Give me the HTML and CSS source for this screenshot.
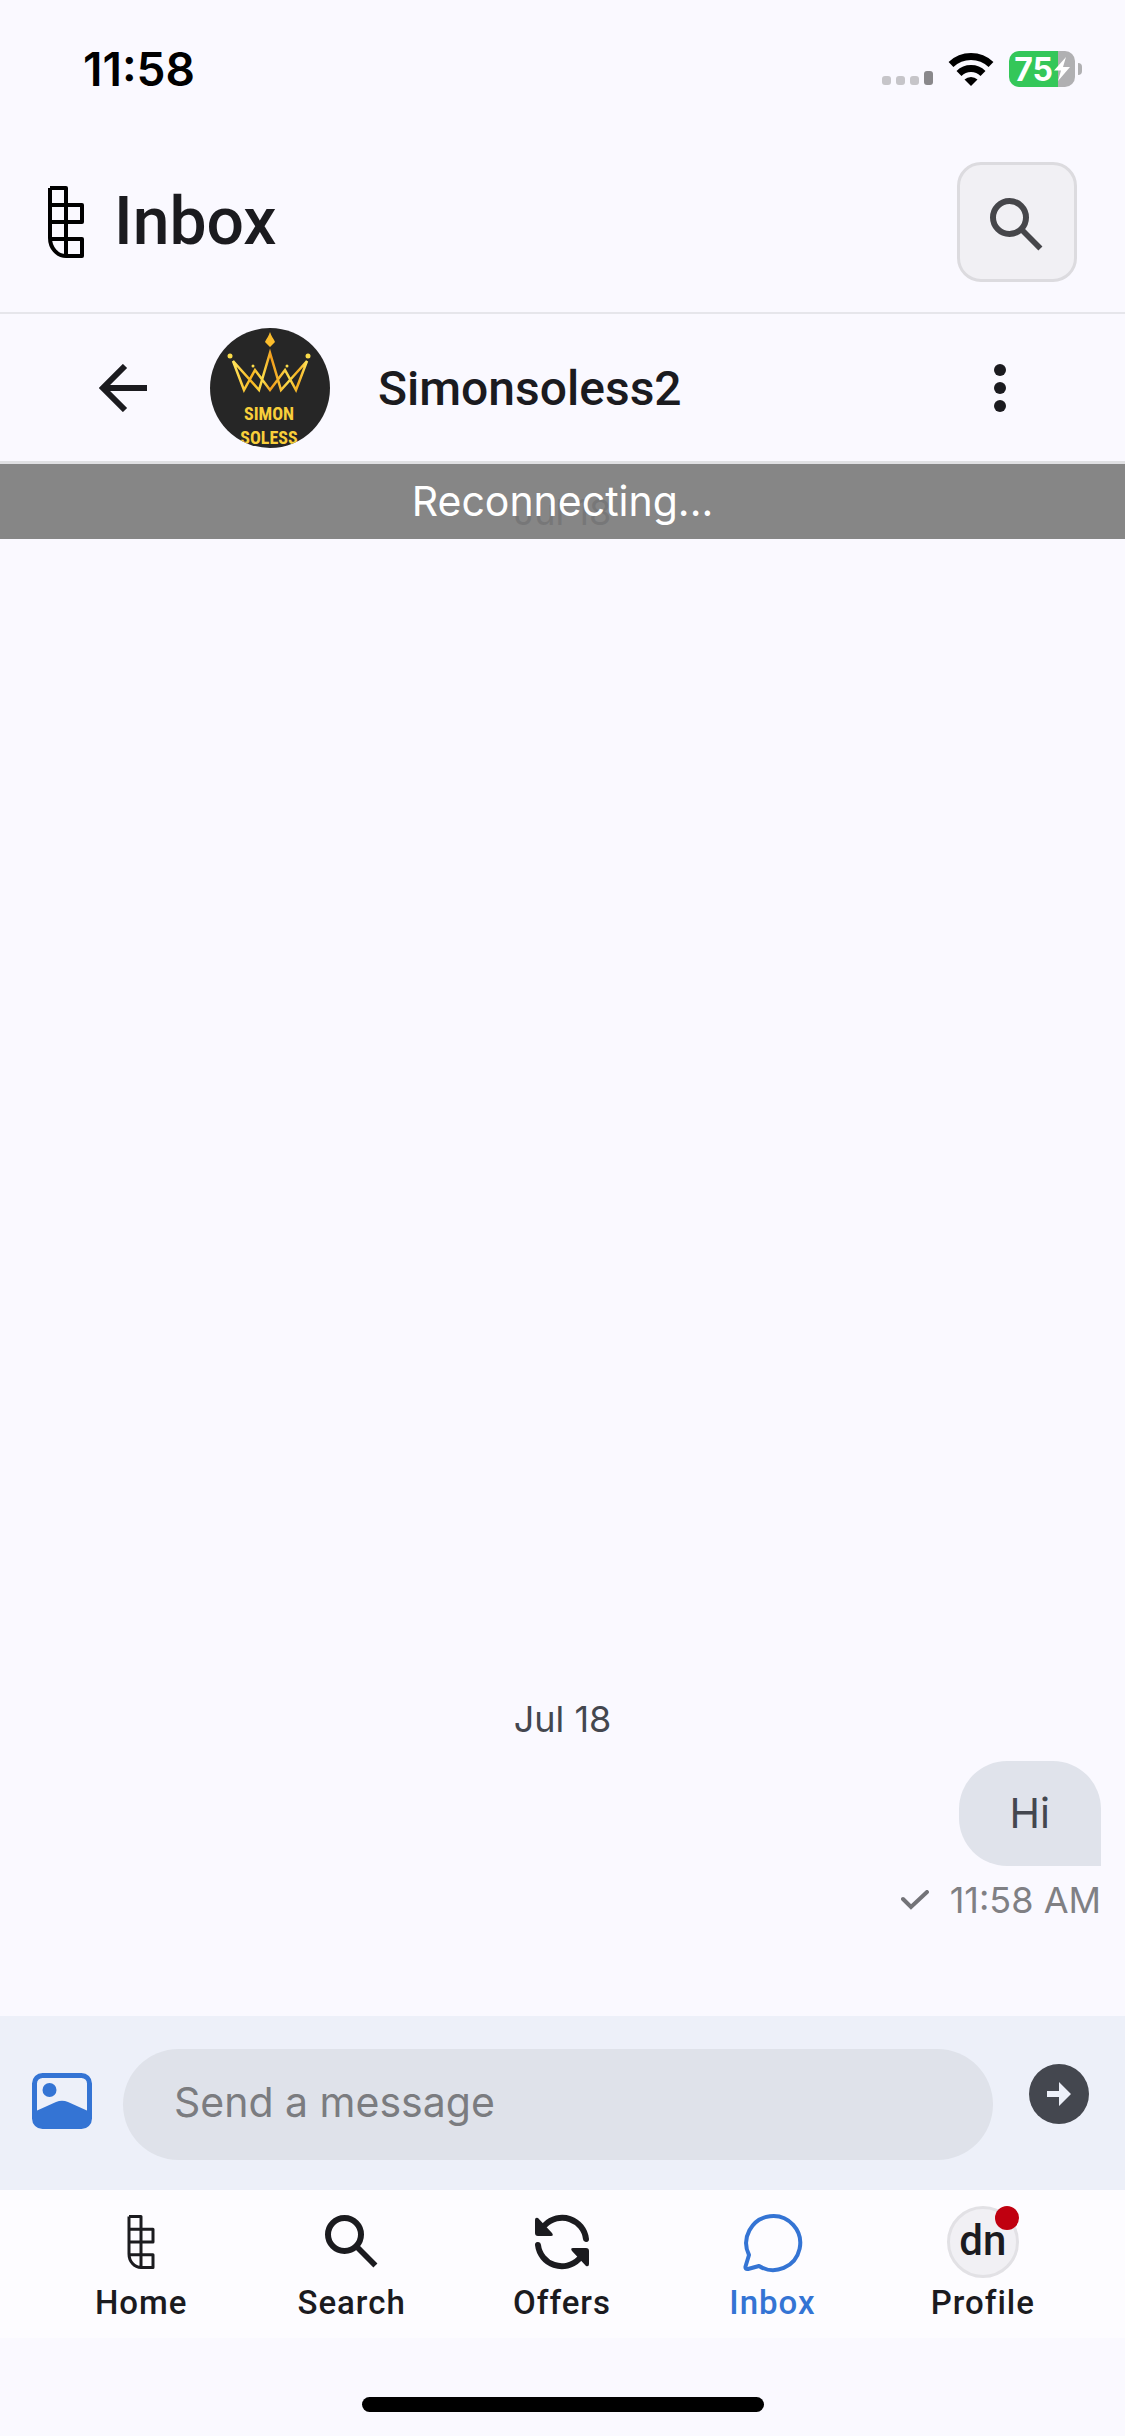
FILE: index.html
```
<!DOCTYPE html>
<html lang='en'>
<head>
	<meta charset='UTF-8'>
	<meta name='viewport' content='width=device-width, initial-scale=1.0'>
	<title>Inbox</title>
	<link rel="stylesheet" href="styles.css">
</head>
<body>
	<svg class='defs' aria-hidden='true'>
		<symbol id='logo' viewBox='0 0 36 72'>
			<path d='M2 2h16v68M2 2v50a16 18 0 0 0 16 18h16V53H2M2 19h32v17H2' fill='none' stroke='currentColor' stroke-width='4' stroke-linejoin='round'/>
		</symbol>
		<symbol id='search' viewBox='0 0 24 24'>
			<circle cx='9.5' cy='9.5' r='5.5' fill='none' stroke='currentColor' stroke-width='2'/>
			<path d='M13.6 13.6l6.2 6.2' fill='none' stroke='currentColor' stroke-width='1.9'/>
		</symbol>
	</svg>

	<div class='status-bar'>
		<span class='clock'>11:58</span>
		<div class='status-icons'>
			<svg class='signal' viewBox='0 0 51 14'>
				<rect x='0' y='5' width='9' height='9' rx='3' fill='#c6c5c9'/>
				<rect x='14' y='5' width='9' height='9' rx='3' fill='#c6c5c9'/>
				<rect x='28' y='5' width='9' height='9' rx='3' fill='#c6c5c9'/>
				<rect x='42' y='0' width='9' height='14' rx='3' fill='#89888b'/>
			</svg>
			<svg class='wifi' viewBox='0 0 46 34'>
				<g fill='none' stroke='#000' stroke-width='7'>
					<path d='M3 12.5a29 29 0 0 1 40 0'/>
					<path d='M11 21.5a17 17 0 0 1 24 0'/>
				</g>
				<path d='M16.5 27.5a9.5 9.5 0 0 1 13 0L23 34z'/>
			</svg>
			<div class='battery'>
				<div class='battery-body'>
					<span>75</span>
					<svg class='bolt' viewBox='0 0 16 24'><path d='M12 0L0 13.5h7L4 24L16 10H9z' fill='#fff'/></svg>
				</div>
				<div class='battery-tip'></div>
			</div>
		</div>
	</div>

	<header class='page-header'>
		<svg class='logo'><use href='#logo'/></svg>
		<h1>Inbox</h1>
		<button class='search-button' aria-label='Search'><svg><use href='#search'/></svg></button>
	</header>

	<div class='chat-header'>
		<button class='icon-button' aria-label='Back'>
			<svg viewBox='0 0 48 48'><path d='M26 2L4 24l22 22M4 24h44' fill='none' stroke='currentColor' stroke-width='6'/></svg>
		</button>
		<svg class='avatar' viewBox='0 0 120 120' role='img' aria-label='Simonsoless2'>
			<defs>
				<linearGradient id='gold'>
					<stop offset='0' stop-color='#ffe45c'/>
					<stop offset='.25' stop-color='#f9b51f'/>
					<stop offset='.4' stop-color='#fbdc4a'/>
					<stop offset='.52' stop-color='#f29d1b'/>
					<stop offset='.75' stop-color='#fbdc4a'/>
					<stop offset='.88' stop-color='#f5ac1d'/>
					<stop offset='1' stop-color='#ffe45c'/>
				</linearGradient>
				<clipPath id='round'><circle cx='60' cy='60' r='60'/></clipPath>
			</defs>
			<g clip-path='url(#round)'>
				<rect width='120' height='120' fill='#262626'/>
				<path d='M60 4c1 4 4 7 5 10l-5 5-5-5c1-3 4-6 5-10z' fill='#fbbd2c'/>
				<path d='M23 33L34 62L45 42L60 62L75 42L86 62L97 33L71 62L60 25L49 62z' fill='none' stroke='url(#gold)' stroke-width='2.5'/>
				<g fill='#fbdc4a'>
					<circle cx='20' cy='28' r='2.5'/>
					<circle cx='98' cy='28' r='2.5'/>
					<circle cx='43' cy='38' r='1.5'/>
					<circle cx='77' cy='38' r='1.5'/>
				</g>
				<text x='59' y='92'>SIMON</text>
				<text x='59' y='116'>SOLESS</text>
			</g>
		</svg>
		<h2>Simonsoless2</h2>
		<button class='icon-button' aria-label='More'>
			<svg viewBox='0 0 48 48'><circle cx='24' cy='6' r='6'/><circle cx='24' cy='24' r='6'/><circle cx='24' cy='42' r='6'/></svg>
		</button>
	</div>

	<main class='messages'>
		<div class='floating-date'>Jul 18</div>
		<div class='reconnecting'>Reconnecting...</div>
		<div class='date'>Jul 18</div>
		<div class='bubble'>Hi</div>
		<div class='sent'>
			<svg viewBox='0 0 28 20'><path d='M2 9l8 8L26 2' fill='none' stroke='#737378' stroke-width='4' stroke-linecap='round'/></svg>
			<span>11:58 AM</span>
		</div>
	</main>

	<form class='composer'>
		<button type='button' class='attach' aria-label='Add a picture'>
			<svg viewBox='0 0 60 56'>
				<rect x='2.5' y='2.5' width='55' height='51' rx='8' fill='none' stroke='currentColor' stroke-width='5'/>
				<circle cx='17.5' cy='17' r='7' fill='currentColor'/>
				<path d='M4 38l20-9q6-2.5 12 0L56 38v8q0 8-8 8H12q-8 0-8-8z' fill='currentColor'/>
			</svg>
		</button>
		<input type='text' placeholder='Send a message' aria-label='Send a message'>
		<button type='button' class='send' aria-label='Send'>
			<svg viewBox='0 0 60 60'><circle cx='30' cy='30' r='30' fill='#44474f'/><path d='M18 27h12v-9l12 12-12 12v-9H18z' fill='#edf0f9'/></svg>
		</button>
	</form>

	<nav class='tabs'>
		<a href='#home'><svg class='tab-logo'><use href='#logo'/></svg>Home</a>
		<a href='#search-tab'><svg><use href='#search'/></svg>Search</a>
		<a href='#offers'>
			<svg viewBox='0 0 72 72'>
				<path d='M60 33A24 24 0 0 0 19 19M12 39A24 24 0 0 0 53 53' fill='none' stroke='currentColor' stroke-width='6' stroke-linecap='round'/>
				<path d='M9 14q0-3 3-2L26 27q2 3-1 3H12q-3 0-3-3zM63 58q0 3-3 2L46 45q-2-3 1-3h13q3 0 3 3z' fill='currentColor'/>
			</svg>Offers
		</a>
		<a href='#inbox' class='active'>
			<svg viewBox='0 0 72 72'><path d='M13 49A27 27 0 1 1 23 60L12 63Q9 63.5 9.5 60.5z' fill='none' stroke='currentColor' stroke-width='4' stroke-linejoin='round'/></svg>Inbox
		</a>
		<a href='#profile'><span class='initials'>dn<i class='dot'></i></span>Profile</a>
	</nav>
	<div class='home-indicator'></div>
</body>
</html>
```

FILE: styles.css
```
*{
	box-sizing:border-box;
}
body{
	display:flex;
	flex-direction:column;
	min-height:100vh;
	margin:0;
	background-color:#faf9ff;
	color:#1b1b1f;
	font-family:Roboto, sans-serif;
}
button{
	padding:0;
	border:none;
	background:none;
	color:inherit;
	font:inherit;
}
svg{
	display:block;
}
.defs{
	position:absolute;
	width:0;
	height:0;
}

.status-bar{
	display:flex;
	align-items:center;
	justify-content:space-between;
	height:132px;
	padding:6px 43px 0 83px;
	color:#000;
	font-family:Inter, sans-serif;
}
.clock{
	font-size:46px;
	font-weight:600;
}
.status-icons{
	display:flex;
	align-items:center;
	gap:15px;
}
.signal{
	width:51px;
	height:14px;
	margin-top:18px;
}
.wifi{
	width:46px;
	height:34px;
}
.battery{
	display:flex;
	align-items:center;
	gap:3px;
}
.battery-body{
	display:flex;
	align-items:center;
	justify-content:center;
	gap:1px;
	width:66px;
	height:36px;
	border-radius:10px;
	background:linear-gradient(to right, #34c759 75%, #b0b0b2 75%);
	color:#fff;
	font-size:32px;
	font-weight:700;
}
.bolt{
	width:16px;
	height:24px;
}
.battery-tip{
	width:4px;
	height:12px;
	border-radius:0 4px 4px 0;
	background-color:#b0b0b2;
}

.page-header{
	display:flex;
	align-items:center;
	padding:30px 48px;
	border-bottom:2px solid #e6e6eb;
}
.logo{
	width:36px;
	height:72px;
	color:#000;
}
.page-header h1{
	flex:1;
	margin:0 30px;
	font-size:66px;
	line-height:78px;
	font-weight:500;
}
.search-button{
	display:flex;
	align-items:center;
	justify-content:center;
	width:120px;
	height:120px;
	padding-top:6px;
	border:3px solid #dcdbdf;
	border-radius:24px;
	background-color:#f1f0f4;
	color:#46464a;
}
.search-button svg{
	width:72px;
	height:72px;
}

.chat-header{
	display:flex;
	align-items:center;
	height:150px;
	padding:1px 50px 0 48px;
	border-bottom:3px solid #e0e0e3;
}
.icon-button{
	display:flex;
	align-items:center;
	justify-content:center;
	width:150px;
	height:120px;
}
.icon-button svg{
	width:48px;
	height:48px;
	fill:currentColor;
}
.avatar{
	width:120px;
	height:120px;
	margin:0 48px 0 12px;
}
.avatar text{
	fill:#f8ce3a;
	font-family:'Roboto Condensed', Roboto, sans-serif;
	font-size:18px;
	font-weight:700;
	text-anchor:middle;
}
.chat-header h2{
	flex:1;
	margin:0;
	font-size:48px;
	font-weight:500;
}

.messages{
	position:relative;
	flex:1;
	display:flex;
	flex-direction:column;
	justify-content:flex-end;
	align-items:flex-end;
	padding:0 24px 92px;
	color:#44474f;
	font-family:Inter, sans-serif;
	font-size:41px;
}
/* the scrolling date stays faintly visible behind the banner */
.floating-date{
	position:absolute;
	top:24px;
	left:0;
	right:0;
	font-size:36px;
	line-height:48px;
	text-align:center;
}
.reconnecting{
	position:absolute;
	top:0;
	left:0;
	right:0;
	background-color:rgba(124, 124, 124, .92);
	color:#fff;
	line-height:75px;
	text-align:center;
}
.date{
	align-self:center;
	margin-bottom:18px;
	font-size:36px;
	line-height:48px;
}
.bubble{
	padding:0 51px;
	border-radius:48px 48px 0 48px;
	background-color:#e0e3eb;
	line-height:105px;
}
.sent{
	display:flex;
	align-items:center;
	gap:21px;
	margin-top:10px;
	color:#808084;
	font-size:36px;
	line-height:48px;
}
.sent svg{
	width:28px;
	height:20px;
}

.composer{
	display:flex;
	align-items:flex-start;
	height:174px;
	padding:33px 36px 0 32px;
	background-color:#edf0f9;
}
.attach{
	margin-right:31px;
	padding-top:24px;
	color:#3474d4;
}
.attach svg{
	width:60px;
	height:56px;
}
.composer input{
	flex:1;
	min-width:0;
	height:111px;
	padding:0 51px 6px;
	border:none;
	border-radius:56px;
	background-color:#dfe2ea;
	font-family:Inter, sans-serif;
	font-size:41px;
}
.composer input::placeholder{
	color:#7b7c80;
	opacity:1;
}
.send{
	margin-left:36px;
	padding-top:15px;
}
.send svg{
	width:60px;
	height:60px;
}

.tabs{
	display:flex;
	padding:16px 37px 17px 36px;
	background-color:#fdfcff;
}
.tabs a{
	flex:1 1 0;
	display:flex;
	flex-direction:column;
	align-items:center;
	gap:7px;
	color:inherit;
	font-size:33px;
	font-weight:500;
	line-height:36px;
	letter-spacing:1px;
	text-decoration:none;
}
.tabs svg{
	width:72px;
	height:72px;
}
.tabs .tab-logo{
	height:54px;
	margin:9px 0;
}
.tabs .active{
	color:#3474d4;
}
.initials{
	position:relative;
	width:72px;
	height:72px;
	border:3px solid #e2e1e5;
	border-radius:50%;
	background-color:#f1f0f4;
	font-size:42px;
	line-height:64px;
	letter-spacing:0;
	text-align:center;
}
.dot{
	position:absolute;
	top:-3px;
	right:-3px;
	width:24px;
	height:24px;
	border-radius:50%;
	background-color:#c00010;
}
.home-indicator{
	align-self:center;
	width:402px;
	height:15px;
	margin:59px 0 24px;
	border-radius:8px;
	background-color:#000;
}
```
